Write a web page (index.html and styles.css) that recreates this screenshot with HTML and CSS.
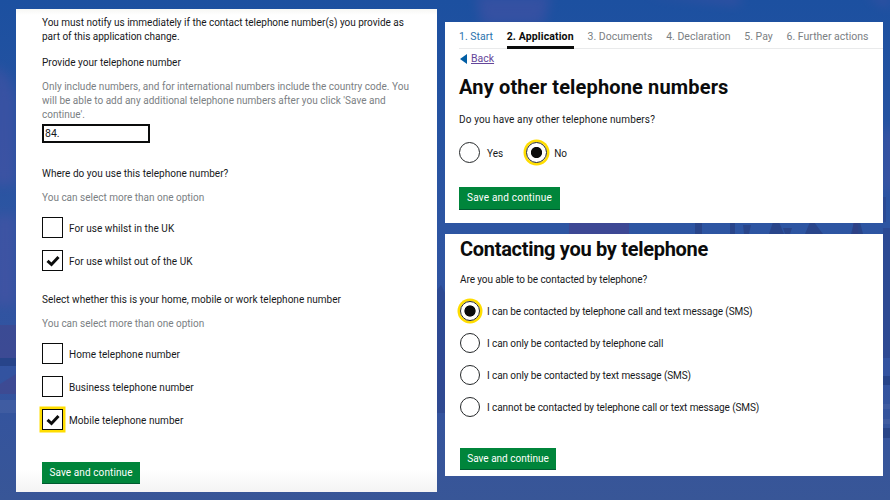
FILE: index.html
```
<!DOCTYPE html>
<html lang="en">
<head>
    <meta charset="UTF-8">
    <title>Telephone numbers</title>
    <link rel="stylesheet" href="styles.css">
</head>
<body>
    <svg class="backdrop" viewBox="0 0 890 500" aria-hidden="true">
        <!-- clouds -->
        <g class="clouds">
            <path d="M476 -5h75l-8 30h-61z M865 -5h25v14z M640 -5h100v10z"/>
            <path d="M-8 65l16 10 8 20v90H-8z M-5 215h20v90H-5z M884 130h12v60h-12z"/>
        </g>
        <!-- skyline -->
        <path d="M569 222h60v12h-60z M853 222h5v12h-5z" fill="#473f8b" opacity="0.6"/>
        <path d="M695 222h7v12h-7z M730 222h5v12h-5z M743 225h8l-2 9h-5z M773 222h6l5 12h-15z M783 228h9l-2 6h-5z M810 222h4l9 12h-18z M854 222h6l3 12h-12z" fill="#283f80" opacity="0.7"/>
        <path d="M883 197h3v25h-3z M883 228h7v130h-7z M437 290l4-5 4 8v120h-8z" fill="#2b3d82" opacity="0.45"/>
        <!-- bridge and river bank -->
        <path d="M0 325h16v33H0z M0 384l16-10v20H0z" fill="#494184" opacity="0.45"/>
        <path d="M0 358h16v8H0z M883 376h7v9h-7z M883 428h7v10h-7z" fill="#203a7c" opacity="0.6"/>
        <path d="M0 400h16v13H0z M883 404h7v5h-7z M883 419h7v5h-7z" fill="#566da8" opacity="0.35"/>
    </svg>

    <div class="page">
        <form class="panel panel-number">
            <p class="notice">You must notify us immediately if the contact telephone number(s) you provide as<br>part of this application change.</p>
            <label class="question" for="number">Provide your telephone number</label>
            <p class="hint hint-number">Only include numbers, and for international numbers include the country code. You<br>will be able to add any additional telephone numbers after you click 'Save and<br>continue'.</p>
            <input class="number" id="number" type="text" value="84.">

            <p class="question question-use">Where do you use this telephone number?</p>
            <p class="hint">You can select more than one option</p>
            <div class="choices">
                <label class="choice"><span class="box"></span><span class="text">For use whilst in the UK</span></label>
                <label class="choice"><span class="box"><svg class="tick" viewBox="0 0 14 12"><path d="M1.5 5.8l4 3.7 7-7.5"/></svg></span><span class="text">For use whilst out of the UK</span></label>
            </div>

            <p class="question question-type">Select whether this is your home, mobile or work telephone number</p>
            <p class="hint">You can select more than one option</p>
            <div class="choices">
                <label class="choice"><span class="box"></span><span class="text">Home telephone number</span></label>
                <label class="choice"><span class="box"></span><span class="text">Business telephone number</span></label>
                <label class="choice"><span class="box focus"><svg class="tick" viewBox="0 0 14 12"><path d="M1.5 5.8l4 3.7 7-7.5"/></svg></span><span class="text">Mobile telephone number</span></label>
            </div>
            <button class="save" type="button">Save and continue</button>
        </form>

        <div class="column">
            <form class="panel panel-other">
                <nav class="steps">
                    <span class="step done">1. Start</span>
                    <span class="step current">2. Application</span>
                    <span class="step">3. Documents</span>
                    <span class="step">4. Declaration</span>
                    <span class="step">5. Pay</span>
                    <span class="step">6. Further actions</span>
                </nav>
                <div class="back"><span class="arrow"></span><a href="#">Back</a></div>
                <h1>Any other telephone numbers</h1>
                <p class="question">Do you have any other telephone numbers?</p>
                <div class="radios-inline">
                    <label class="option"><span class="radio"></span><span class="text">Yes</span></label>
                    <label class="option"><span class="radio selected"></span><span class="text">No</span></label>
                </div>
                <button class="save" type="button">Save and continue</button>
            </form>

            <form class="panel panel-contact">
                <h1>Contacting you by telephone</h1>
                <p class="question">Are you able to be contacted by telephone?</p>
                <div class="radios">
                    <label class="option"><span class="radio selected"></span><span class="text">I can be contacted by telephone call and text message (SMS)</span></label>
                    <label class="option"><span class="radio"></span><span class="text">I can only be contacted by telephone call</span></label>
                    <label class="option"><span class="radio"></span><span class="text">I can only be contacted by text message (SMS)</span></label>
                    <label class="option"><span class="radio"></span><span class="text">I cannot be contacted by telephone call or text message (SMS)</span></label>
                </div>
                <button class="save" type="button">Save and continue</button>
            </form>
        </div>
    </div>
</body>
</html>
```

FILE: styles.css
```
* {
    box-sizing: border-box;
}

body {
    margin: 0;
    height: 500px;
    overflow: hidden;
    background: linear-gradient(#1c50a0, #2d55a2 45%, #3353a0 75%, #385697);
    color: #17191b;
    font-family: Roboto, "Noto Sans", sans-serif;
    font-size: 10px;
    line-height: 14px;
}

.backdrop {
    position: absolute;
    top: 0;
    left: 0;
    width: 890px;
    height: 500px;
}

.clouds {
    fill: #5352a5;
    opacity: 0.45;
    filter: blur(6px);
}

.page {
    position: relative;
    display: flex;
    align-items: flex-start;
    gap: 8px;
    padding: 9px 7px 0 16px;
}

p,
h1 {
    margin: 0;
    white-space: nowrap;
}

.panel {
    background: #fff;
}

.panel-number {
    width: 421px;
    height: 483px;
    padding: 7px 0 0 26px;
    background: linear-gradient(#f7f7f4, #fff 6px, #fff 460px, #f4f4f4);
}

.notice {
    letter-spacing: -0.01px;
}

.question {
    display: block;
}

.panel-number .question {
    margin-top: 12px;
    letter-spacing: 0.02px;
}

.hint {
    margin-top: 10px;
    color: #7b8083;
}

.hint-number {
    letter-spacing: 0.02px;
}

.number {
    display: block;
    width: 108px;
    height: 19px;
    margin-top: 2px;
    padding: 0 1px 1px;
    border: 2px solid #0b0c0c;
    font: inherit;
    font-size: 10.5px;
    color: inherit;
}

.panel-number .question-use {
    margin-top: 24px;
}

.panel-number .question-type {
    margin-top: 22px;
}

.choices {
    display: flex;
    flex-direction: column;
    gap: 12px;
    margin-top: 12px;
    letter-spacing: 0.05px;
}

.choice {
    display: flex;
    align-items: center;
    gap: 6px;
}

.box {
    display: flex;
    align-items: center;
    justify-content: center;
    width: 21px;
    height: 21px;
    border: 1.5px solid #0b0c0c;
}

.focus {
    box-shadow: 0 0 0 2.5px #ffdd00;
}

.tick {
    width: 14px;
    height: 12px;
    fill: none;
    stroke: #0b0c0c;
    stroke-width: 3;
}

.save {
    display: block;
    height: 22px;
    padding: 0;
    border: 0;
    border-bottom: 1px solid #005a30;
    background: #00853b;
    color: #fff;
    font: inherit;
    letter-spacing: 0.1px;
    white-space: nowrap;
}

.panel-number .save {
    width: 98px;
    margin-top: 32px;
}

.column {
    display: flex;
    flex-direction: column;
    gap: 11px;
    padding-top: 13px;
}

.panel-other {
    width: 438px;
    height: 201px;
    padding-left: 14px;
}

.steps {
    display: flex;
    gap: 13.8px;
    height: 27px;
    padding-top: 8px;
    border-bottom: 1px solid #e9eaeb;
    color: #7b8083;
    font-size: 10.5px;
    white-space: nowrap;
}

.done {
    color: #2b72ad;
}

.current {
    height: 19px;
    border-bottom: 3px solid #0b0c0c;
    color: #0b0c0c;
    font-weight: bold;
    letter-spacing: 0.13px;
}

.back {
    display: flex;
    align-items: center;
    gap: 4px;
    margin-top: 3px;
    padding-left: 1px;
    font-size: 10.5px;
}

.back a {
    color: #64469a;
}

.arrow {
    border: solid transparent;
    border-width: 5px 7px 5px 0;
    border-right-color: #005ea5;
}

h1 {
    color: #0b0c0c;
    font-size: 20px;
    line-height: 24px;
}

.panel-other h1 {
    margin-top: 9px;
    letter-spacing: 0.15px;
}

.panel-other .question {
    margin-top: 14px;
    letter-spacing: 0.13px;
}

.radios-inline {
    display: flex;
    gap: 23px;
    margin-top: 15px;
}

.option {
    display: flex;
    align-items: center;
    gap: 7px;
    white-space: nowrap;
}

.text {
    padding-top: 2px;
}

.radio {
    width: 21px;
    height: 21px;
    border: 1.3px solid #25282a;
    border-radius: 50%;
}

.selected {
    background: radial-gradient(circle, #0b0c0c 5.2px, transparent 6px);
    box-shadow: 0 0 0 2.5px #ffdd00;
}

.panel-other .save {
    width: 101px;
    height: 23px;
    margin-top: 24px;
    letter-spacing: 0.2px;
}

.panel-contact {
    width: 438px;
    height: 242px;
    padding: 3px 0 0 15px;
}

.panel-contact h1 {
    letter-spacing: -0.3px;
}

.panel-contact .question {
    margin-top: 12px;
    letter-spacing: -0.08px;
}

.radios {
    display: flex;
    flex-direction: column;
    gap: 12px;
    margin-top: 14px;
    letter-spacing: -0.09px;
}

.panel-contact .radio {
    width: 20px;
    height: 20px;
    border-width: 1px;
}

.panel-contact .save {
    width: 96px;
    margin-top: 31px;
    letter-spacing: 0;
}
```
